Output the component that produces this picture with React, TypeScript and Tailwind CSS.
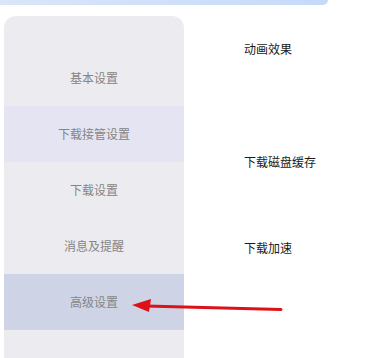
import React from 'react';

const items = [
  { label: '基本设置', cls: 'h-[56px]' },
  { label: '下载接管设置', cls: 'h-[56px] bg-[#e4e4f3]' },
  { label: '下载设置', cls: 'h-[56px]' },
  { label: '消息及提醒', cls: 'h-[56px]' },
  { label: '高级设置', cls: 'h-[56px] bg-[#ced4e6]' },
];

export default function App() {
  return (
    <div
      className="relative w-[372px] h-[358px] overflow-hidden bg-white"
      style={{ fontFamily: '"Noto Sans CJK SC", "Noto Sans", sans-serif' }}
    >
      <div className="h-[5px] w-[328px] rounded-br-[6px] bg-gradient-to-r from-[#d9e6f8] to-[#c6daf8]" />
      <div className="flex mt-[11px]">
        <div className="ml-[4px] w-[180px] h-[400px] rounded-t-[12px] bg-[#ebebf0] pt-[34px] flex flex-col">
          {items.map((it) => (
            <div key={it.label} className={`${it.cls} flex items-center justify-center text-[12px] text-[#858585]`}>
              {it.label}
            </div>
          ))}
        </div>
        <div className="ml-[60px] flex flex-col text-[12px] text-[#1a1a1a]">
          <div className="mt-[24px] h-[18px] leading-[18px]">动画效果</div>
          <div className="mt-[95px] h-[18px] leading-[18px]">下载磁盘缓存</div>
          <div className="mt-[68px] h-[18px] leading-[18px]">下载加速</div>
        </div>
      </div>
      <svg className="absolute left-0 top-0" width="372" height="358" viewBox="0 0 372 358">
        <line x1="281" y1="309.5" x2="146" y2="306" stroke="#dd1219" strokeWidth="3" strokeLinecap="round" />
        <polygon points="132,305 151,299 149,312" fill="#dd1219" />
      </svg>
    </div>
  );
}
